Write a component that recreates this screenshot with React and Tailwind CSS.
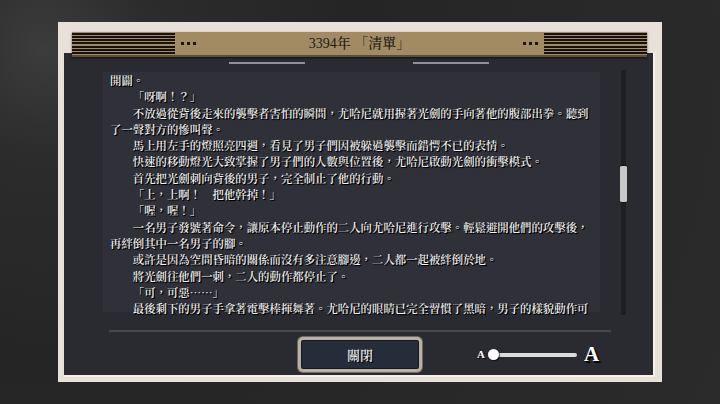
import React from "react";

const lines = [
  { t: "開闢。", i: false },
  { t: "「呀啊！？」", i: true },
  { t: "不放過從背後走來的襲擊者害怕的瞬間，尤哈尼就用握著光劍的手向著他的腹部出拳。聽到", i: true },
  { t: "了一聲對方的慘叫聲。", i: false },
  { t: "馬上用左手的燈照亮四週，看見了男子們因被躲過襲擊而錯愕不已的表情。", i: true },
  { t: "快速的移動燈光大致掌握了男子們的人數與位置後，尤哈尼啟動光劍的衝擊模式。", i: true },
  { t: "首先把光劍刺向背後的男子，完全制止了他的行動。", i: true },
  { t: "「上，上啊！　把他幹掉！」", i: true },
  { t: "「喔，喔！」", i: true },
  { t: "一名男子發號著命令，讓原本停止動作的二人向尤哈尼進行攻擊。輕鬆避開他們的攻擊後，", i: true },
  { t: "再絆倒其中一名男子的腳。", i: false },
  { t: "或許是因為空間昏暗的關係而沒有多注意腳邊，二人都一起被絆倒於地。", i: true },
  { t: "將光劍往他們一刺，二人的動作都停止了。", i: true },
  { t: "「可，可惡……」", i: true },
  { t: "最後剩下的男子手拿著電擊棒揮舞著。尤哈尼的眼睛已完全習慣了黑暗，男子的樣貌動作可", i: true },
];

function Stripes() {
  return (
    <div className="flex h-full w-[103px] flex-col justify-between py-[1px]">
      {[0, 1, 2, 3, 4, 5, 6].map((k) => (
        <div key={k} className="h-[2px] w-full bg-[#15130f]" />
      ))}
    </div>
  );
}

function Dots() {
  return (
    <div className="flex gap-[3px] px-[6px]">
      <div className="h-[3px] w-[3px] bg-[#1a1712]" />
      <div className="h-[3px] w-[3px] bg-[#1a1712]" />
      <div className="h-[3px] w-[3px] bg-[#1a1712]" />
    </div>
  );
}

export default function App() {
  return (
    <div className="relative h-[404px] w-[720px] overflow-hidden bg-[#2a2a2a] bg-[radial-gradient(circle_at_6%_12%,#3c3c3c_0%,#2c2c2c_14%,#252525_40%,#2b2b2b_100%)] pl-[58px] pt-[22px]">
      <div className="flex h-[360px] w-[604px] flex-col bg-[#e7e1d9] pb-[5px] pl-[6px] pr-[7px] pt-[10px]">
        {/* header */}
        <div className="relative z-10 mx-[8px] flex h-[25px] shrink-0 items-center justify-between border-b-[2px] border-[#5c4d35] bg-[#a28b63] shadow-[0_1px_2px_rgba(0,0,0,0.6)]">
          <div className="flex h-full items-center">
            <Stripes />
            <Dots />
          </div>
          <div className="text-[14px] font-medium leading-none text-[#1c1a16] [font-family:'Liberation_Serif','Noto_Serif_CJK_TC','Noto_Sans_CJK_TC',serif]">
            3394年 「清單」
          </div>
          <div className="flex h-full items-center">
            <Dots />
            <Stripes />
          </div>
        </div>

        {/* dark panel */}
        <div className="-mt-[4px] flex h-[324px] flex-col bg-[#2a2b30] shadow-[inset_-2px_0_0_#f5f2ec,inset_0_-2px_0_#f5f2ec]">
          <div className="mt-[9px] flex h-[2px] justify-center gap-[108px] pr-[2px]">
            <div className="h-[2px] w-[76px] bg-[#8d9096]" />
            <div className="h-[2px] w-[76px] bg-[#8d9096]" />
          </div>

          <div className="mt-[8px] flex items-start">
            <div className="ml-[39px] h-[240px] w-[497px] bg-[#303138] pl-[7px] text-[11.4px] font-semibold leading-[16.3px] text-[#f2f2f2] [font-family:'Noto_Serif_CJK_TC','Noto_Sans_CJK_TC',serif] [text-shadow:1px_1px_0_#000,1px_1px_1px_#000]">
              {lines.map((l, k) => (
                <div key={k} className={"whitespace-nowrap " + (l.i ? "pl-[2em]" : "")}>
                  {l.t}
                </div>
              ))}
            </div>
            <div className="relative -mt-[2px] ml-[21px] h-[245px] w-[5px] bg-[#1e1f23]">
              <div className="absolute left-[-1px] top-[95px] h-[38px] w-[7px] rounded-[2px] border-y border-[#111] bg-[#c8c8c8]" />
            </div>
          </div>

          <div className="ml-[45px] mt-[15px] h-[2px] w-[502px] bg-[#454a52]" />

          <div className="mt-[5px] flex items-center pl-[234px]">
            <div className="flex h-[35px] w-[124px] items-center justify-center rounded-[5px] border-[3px] border-[#b9b2a4] bg-[#252d3b] shadow-[inset_0_0_0_1px_#15171c,0_0_0_1px_#6e6a60]">
              <span className="text-[13px] font-semibold text-[#e6e6e6] [font-family:'Noto_Serif_CJK_TC','Noto_Sans_CJK_TC',serif] [text-shadow:1px_1px_0_#000]">
                關閉
              </span>
            </div>
            <div className="ml-[55px] flex items-center">
              <span className="text-[11px] font-bold leading-none text-white [font-family:'Liberation_Serif',serif] [text-shadow:1px_1px_0_#000]">
                A
              </span>
              <div className="relative ml-[3px] h-[11px] w-[89px]">
                <div className="absolute left-[5px] right-0 top-[3.5px] h-[4px] rounded-full bg-[#dcdcdc]" />
                <div className="absolute left-0 top-0 h-[11px] w-[11px] rounded-full bg-white shadow-[1px_1px_1px_rgba(0,0,0,0.6)]" />
              </div>
              <span className="ml-[7px] text-[21px] font-bold leading-none text-white [font-family:'Liberation_Serif',serif] [text-shadow:1px_1px_0_#000,2px_2px_1px_#000]">
                A
              </span>
            </div>
          </div>
        </div>
      </div>
    </div>
  );
}
